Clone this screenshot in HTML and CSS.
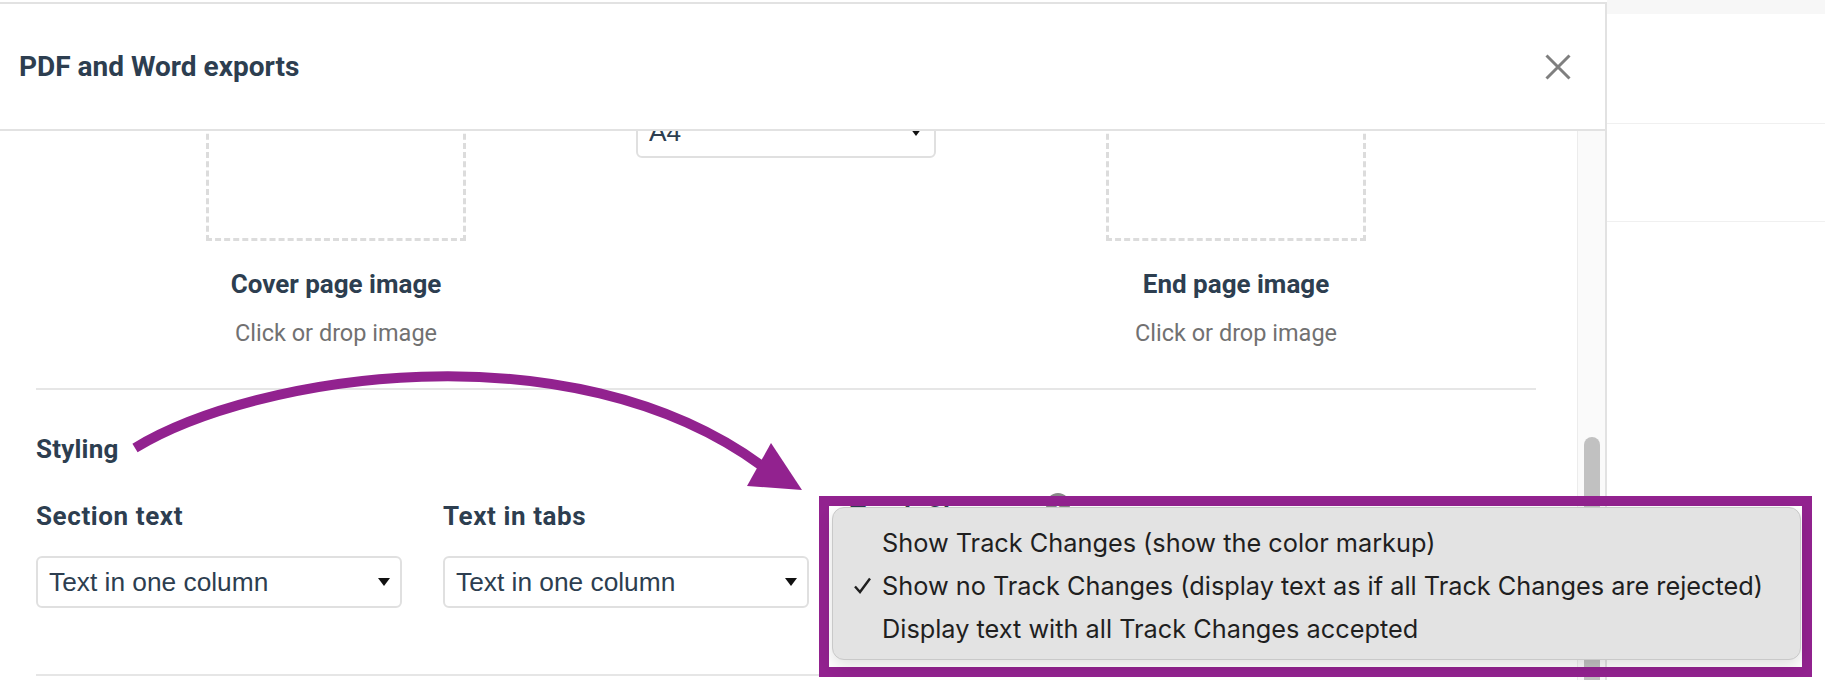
FILE: index.html
```html
<!DOCTYPE html>
<html lang="en">

<head>
    <meta charset="UTF-8">
    <meta name="viewport" content="width=device-width, initial-scale=1.0">
    <title>PDF and Word exports</title>
    <link rel="stylesheet" href="styles.css">
</head>

<body>

    <div class="page">
        <div class="modal">
            <div class="modal-header">
                <h1 class="modal-title">PDF and Word exports</h1>
                <button class="close-btn" aria-label="Close">
                    <svg width="26" height="26" viewBox="0 0 26 26">
                        <path d="M1.5 1.5 L24.5 24.5 M24.5 1.5 L1.5 24.5" stroke="#7f7f7f" stroke-width="3" fill="none" />
                    </svg>
                </button>
            </div>

            <div class="modal-body">
                <div class="modal-content">
                    <div class="images-row">
                        <div class="image-col">
                            <div class="drop-box"></div>
                            <div class="image-title">Cover page image</div>
                            <div class="image-hint">Click or drop image</div>
                        </div>

                        <div class="format-col">
                            <div class="field-label">Page size</div>
                            <div class="select select-small">
                                <span>A4</span>
                                <span class="caret"></span>
                            </div>
                        </div>

                        <div class="image-col">
                            <div class="drop-box"></div>
                            <div class="image-title">End page image</div>
                            <div class="image-hint">Click or drop image</div>
                        </div>
                    </div>

                    <hr class="divider divider-top">

                    <h2 class="section-title">Styling</h2>

                    <div class="styling-grid">
                        <div class="field">
                            <div class="field-label">Section text</div>
                            <div class="select">
                                <span>Text in one column</span>
                                <span class="caret"></span>
                            </div>
                        </div>

                        <div class="field">
                            <div class="field-label">Text in tabs</div>
                            <div class="select">
                                <span>Text in one column</span>
                                <span class="caret"></span>
                            </div>
                        </div>

                        <div class="field">
                            <div class="field-label">
                                <span>Track Changes</span>
                                <span class="info-icon">i</span>
                            </div>
                            <div class="select">
                                <span>Show no Track Changes</span>
                                <span class="caret"></span>
                            </div>
                        </div>
                    </div>

                    <hr class="divider divider-bottom">
                </div>

                <div class="scrollbar">
                    <div class="scroll-thumb"></div>
                </div>
            </div>
        </div>

        <div class="backdrop">
            <div class="backdrop-top"></div>
            <div class="backdrop-row"></div>
            <div class="backdrop-row backdrop-row-2"></div>
        </div>
    </div>

    <!-- annotation: arrow pointing at the open menu -->
    <svg class="annotation-arrow" width="900" height="600" viewBox="0 0 900 600">
        <path d="M135 448 C 255 375, 570 325, 762 466" stroke="#92228f" stroke-width="10" fill="none" />
        <polygon points="771,443 747,486 802,490" fill="#92228f" />
    </svg>

    <div class="highlight"></div>

    <div class="menu">
        <div class="menu-item"><span class="check"></span>Show Track Changes (show the color markup)</div>
        <div class="menu-item">
            <span class="check">
                <svg width="19" height="19" viewBox="0 0 19 19">
                    <path d="M2 10.5 L7 16 L17 2.5" stroke="#1f1f1f" stroke-width="2.4" fill="none" />
                </svg>
            </span>Show no Track Changes (display text as if all Track Changes are rejected)
        </div>
        <div class="menu-item"><span class="check"></span>Display text with all Track Changes accepted</div>
    </div>

</body>

</html>
```

FILE: styles.css
```css
* {
    box-sizing: border-box;
}

body {
    margin: 0;
    font-family: Roboto, "Liberation Sans", sans-serif;
    color: #2d3e50;
    background: #fff;
    overflow: hidden;
}

.page {
    display: flex;
    height: 680px;
}

/* modal */

.modal {
    flex: none;
    width: 1607px;
    margin-top: 2px;
    border-top: 2px solid #e2e2e2;
    border-right: 2px solid #e2e2e2;
    display: flex;
    flex-direction: column;
    background: #fff;
}

.modal-header {
    flex: none;
    height: 127px;
    display: flex;
    align-items: center;
    justify-content: space-between;
    padding: 0 34px 0 19px;
    border-bottom: 2px solid #e2e2e2;
}

.modal-title {
    margin: 0;
    font-size: 28px;
    font-weight: 700;
}

.close-btn {
    border: 0;
    padding: 0;
    background: none;
    width: 26px;
    height: 26px;
    cursor: pointer;
}

.close-btn svg {
    display: block;
}

.modal-body {
    flex: 1;
    display: flex;
    overflow: hidden;
}

.modal-content {
    flex: 1;
    padding: 0 41px 0 36px;
    margin-top: -71px;
}

.scrollbar {
    flex: none;
    width: 28px;
    background: #fafafa;
    border-left: 1px solid #ececec;
    padding-top: 306px;
}

.scroll-thumb {
    width: 16px;
    height: 420px;
    margin-left: 6px;
    background: #c1c1c1;
    border-radius: 8px;
}

/* images */

.images-row {
    display: grid;
    grid-template-columns: 600px 300px 600px;
}

.image-col {
    display: flex;
    flex-direction: column;
    align-items: center;
}

.drop-box {
    width: 260px;
    height: 181px;
    border: 3px dashed #dcdcdc;
}

.image-title {
    margin-top: 28px;
    font-size: 26px;
    line-height: 30px;
    font-weight: 700;
}

.image-hint {
    margin-top: 20px;
    font-size: 23.5px;
    line-height: 28px;
    color: #717171;
}

.format-col .field-label {
    margin-bottom: 16px;
}

/* form */

.divider {
    border: 0;
    height: 2px;
    background: #e6e6e6;
    margin: 0;
}

.divider-top {
    margin-top: 41px;
}

.divider-bottom {
    margin-top: 66px;
}

.section-title {
    margin: 44px 0 0;
    font-size: 26px;
    line-height: 30px;
    font-weight: 700;
    letter-spacing: 0.2px;
}

.styling-grid {
    margin-top: 37px;
    display: grid;
    grid-template-columns: 366px 366px 1fr;
    column-gap: 41px;
}

.field-label {
    display: flex;
    align-items: flex-start;
    gap: 14px;
    font-size: 26px;
    line-height: 30px;
    font-weight: 700;
    letter-spacing: 0.6px;
}

.field .select {
    margin-top: 25px;
}

.info-icon {
    width: 24px;
    height: 24px;
    margin-top: -8px;
    border-radius: 50%;
    background: #888;
    color: #fff;
    font-size: 16px;
    line-height: 24px;
    text-align: center;
}

.select {
    height: 52px;
    display: flex;
    align-items: center;
    justify-content: space-between;
    padding: 0 10px 0 11px;
    border: 2px solid #e0e0e0;
    border-radius: 6px;
    font-family: "Liberation Sans", Arial, sans-serif;
    font-size: 26.3px;
    color: #2d3e50;
    background: #fff;
}

.select-small {
    padding-right: 12px;
}

.caret {
    width: 0;
    height: 0;
    border-left: 6px solid transparent;
    border-right: 6px solid transparent;
    border-top: 8px solid #111;
}

/* page behind the modal */

.backdrop {
    flex: 1;
    background: #fff;
}

.backdrop-top {
    height: 14px;
    background: #f7f7f7;
}

.backdrop-row {
    height: 110px;
    border-bottom: 1px solid #f0f0f0;
}

.backdrop-row-2 {
    height: 98px;
}

/* annotation overlay */

.annotation-arrow {
    position: absolute;
    left: 0;
    top: 0;
    pointer-events: none;
}

.highlight {
    position: absolute;
    left: 819px;
    top: 496px;
    width: 993px;
    height: 181px;
    border: 10px solid #92228f;
}

.menu {
    position: absolute;
    left: 832px;
    top: 507px;
    width: 969px;
    height: 153px;
    padding-top: 13px;
    background: #e3e3e3;
    border: 1px solid #c9c9c9;
    border-radius: 12px;
    box-shadow: 0 6px 16px rgba(0, 0, 0, 0.12);
    font-family: Inter, "Noto Sans", sans-serif;
    font-size: 25.3px;
    color: #1f1f1f;
}

.menu-item {
    height: 43px;
    display: flex;
    align-items: center;
    padding-left: 20px;
}

.check {
    width: 29px;
    flex: none;
    display: flex;
    align-items: center;
}

.check svg {
    display: block;
}
```
